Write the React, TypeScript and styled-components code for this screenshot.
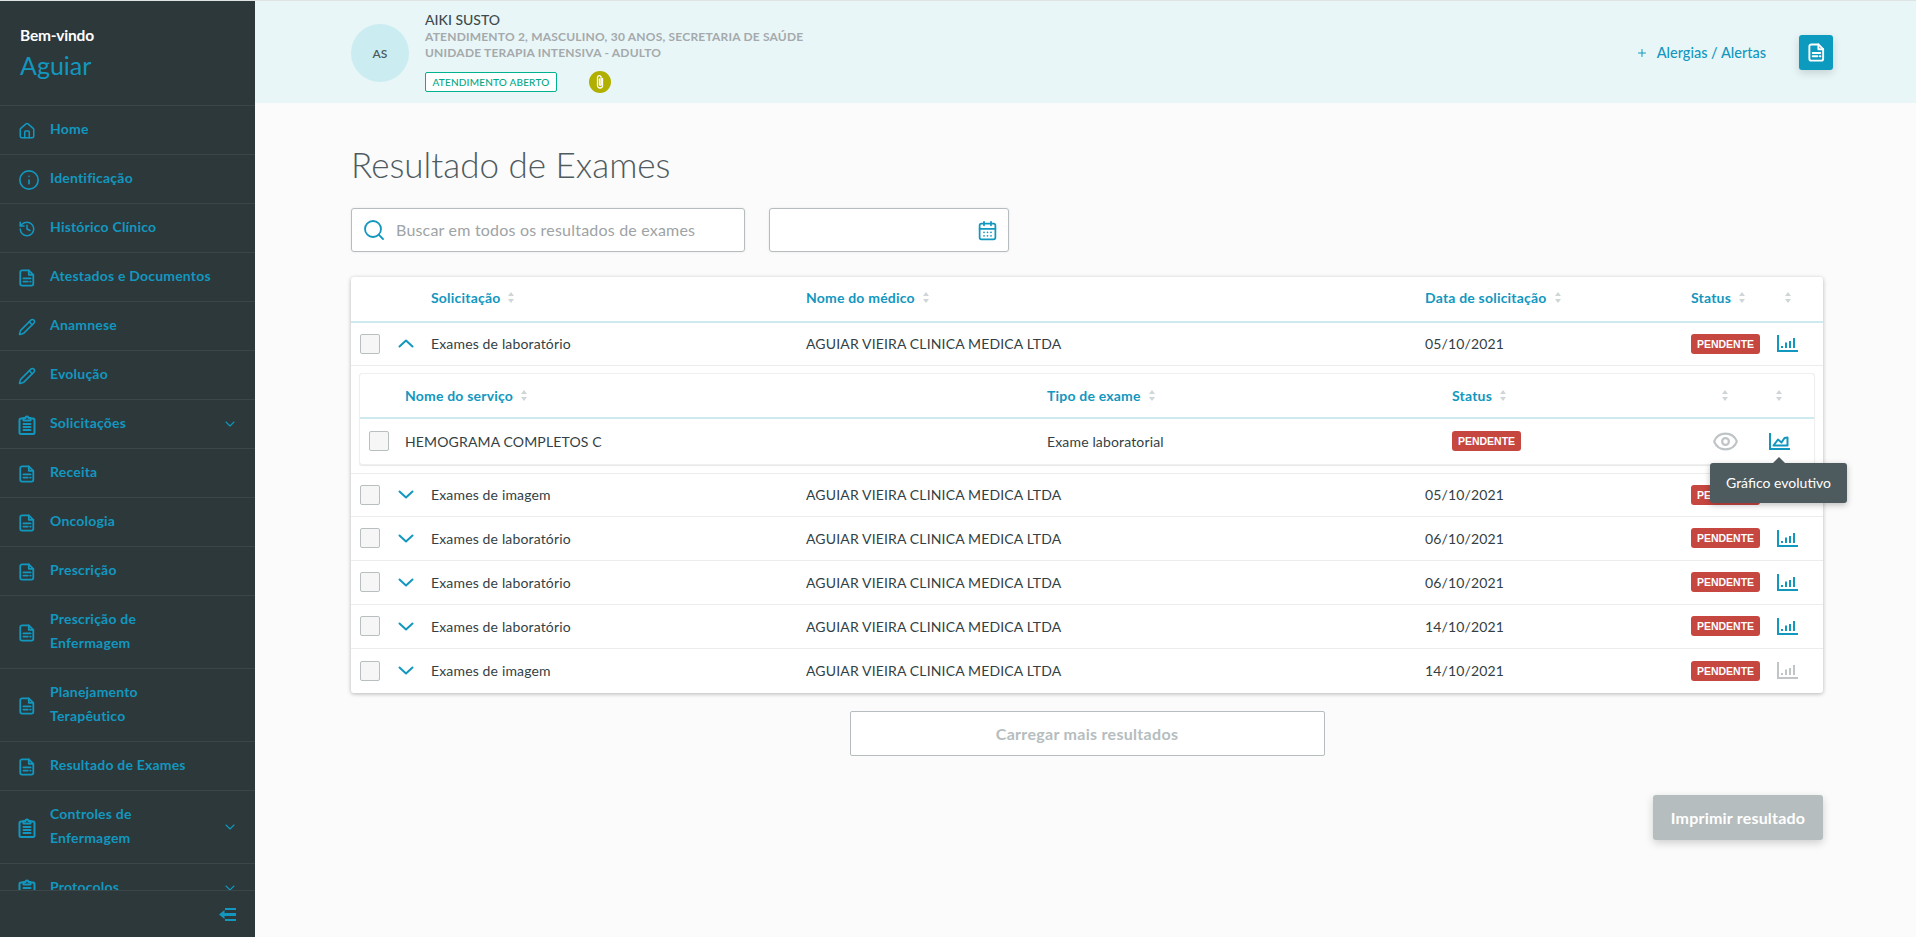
import React from "react";
import styled, { createGlobalStyle } from "styled-components";
import { Home, Info, History, Pencil, ChevronDown, Search, CalendarDays, Plus, Eye } from "lucide-react";

const FONT = `Lato, "Noto Sans", "Liberation Sans", sans-serif`;
const BLUE = "#1297bf";

const Global = createGlobalStyle`
  html, body { margin: 0; padding: 0; height: 100%; }
  body { font-family: ${FONT}; background: #fbfbfb; color: #2d383b; overflow: hidden; }
  * { box-sizing: border-box; }
`;

const Page = styled.div`display: flex; height: 937px; width: 1916px; overflow: hidden;`;
const Side = styled.aside`width: 255px; flex: none; display: flex; flex-direction: column; background: #2d383b; border-top: 1px solid #dfe3e3;`;
const Welcome = styled.div`height: 105px; flex: none; padding: 22px 20px 0; border-bottom: 1px solid #3b4649;`;
const Hello = styled.div`color: #fff; font-size: 15.5px; line-height: 24px; font-weight: 700; letter-spacing: -.2px;`;
const UserName = styled.div`color: ${BLUE}; font-size: 25px; line-height: 32px; margin-top: 2px; font-weight: 400;`;
const NavList = styled.nav`flex: 1; min-height: 0; overflow: hidden;`;
const NavRow = styled.div<{ $tall?: boolean }>`
  height: ${p => (p.$tall ? 73 : 49)}px; display: flex; align-items: center; padding: 0 17px 0 18px;
  border-bottom: 1px solid #3b4649; color: ${BLUE}; font-size: 14px; font-weight: 700; line-height: 24px; letter-spacing: .2px;
`;
const NavIcon = styled.span`width: 32px; flex: none; display: flex; align-items: center; justify-content: flex-start; margin-top: 2px;`;
const NavLabel = styled.span`flex: 1; margin-top: -3px;`;
const SideFoot = styled.div`height: 47px; flex: none; border-top: 1px solid #3b4649; display: flex; align-items: center; justify-content: flex-end; padding: 0 19px 0 0;`;

const Main = styled.div`flex: 1; min-width: 0; display: flex; flex-direction: column;`;
const Banner = styled.header`height: 103px; flex: none; background: #e8f6f8; border-top: 1px solid #dfe3e3; display: flex; align-items: flex-start; padding: 0 83px 0 96px;`;
const Avatar = styled.div`width: 58px; height: 58px; border-radius: 50%; background: #cbecf1; margin-top: 23px; display: flex; align-items: center; justify-content: center; font-size: 12px; font-weight: 600; color: #4d5a5e; flex: none;`;
const Patient = styled.div`margin-left: 16px; padding-top: 10px;`;
const PName = styled.div`font-size: 14px; line-height: 18px; font-weight: 500; color: #3e4a4e;`;
const PMeta = styled.div`font-size: 12px; line-height: 16px; font-weight: 700; color: #a5a9ab; letter-spacing: .2px;`;
const Tags = styled.div`display: flex; align-items: center; margin-top: 10px;`;
const OpenTag = styled.span`width: 132px; height: 20px; border: 1px solid #00b28e; border-radius: 2px; background: #fff; color: #00a886; font-size: 10px; font-weight: 500; letter-spacing: .2px; display: flex; align-items: center; justify-content: center;`;
const ClipDot = styled.span`width: 22px; height: 22px; border-radius: 50%; background: #b1b000; margin-left: 32px; display: flex; align-items: center; justify-content: center;`;
const BannerRight = styled.div`margin-left: auto; display: flex; align-items: center; padding-top: 34px;`;
const AlertLink = styled.span`color: ${BLUE}; font-size: 14.5px; font-weight: 500; display: flex; align-items: center; gap: 9px;`;
const DocButton = styled.span`width: 34px; height: 35px; background: #0c9abe; border-radius: 3px; margin-left: 33px; display: flex; align-items: center; justify-content: center; box-shadow: 0 3px 8px rgba(0,0,0,.15);`;

const Content = styled.main`flex: 1; padding: 0 93px 0 96px; min-height: 0;`;
const Title = styled.h1`margin: 41px 0 0; font-size: 35px; line-height: 40px; font-weight: 300; color: #4f5b5f;`;
const Filters = styled.div`display: flex; gap: 24px; margin-top: 24px;`;
const Field = styled.div<{ $w: number }>`width: ${p => p.$w}px; height: 44px; background: #fff; border: 1px solid #b5bdbe; border-radius: 3px; display: flex; align-items: center; padding: 0 10px; color: #a5a9ab; font-size: 14px; box-shadow: 0 0 3px rgba(0,0,0,.08);`;
const FieldSpacer = styled.span`flex: 1;`;
const FieldText = styled.span`margin-left: 10px; padding-bottom: 1px; font-size: 16px; letter-spacing: .2px; color: #9ea3a5;`;

const Card = styled.section`margin-top: 25px; background: #fff; border-radius: 3px; box-shadow: 0 1px 4px rgba(0,0,0,.28);`;
const mainCols = "80px 375px 619px 266px 74px 45px";
const subCols = "45px 642px 405px 247px 52px 56px";
const Head = styled.div<{ $cols: string; $h: number; $lift?: number }>`display: grid; grid-template-columns: ${p => p.$cols}; height: ${p => p.$h}px; align-items: center; padding-bottom: ${p => p.$lift || 0}px; border-bottom: 2px solid #cfe9f0;`;
const Row = styled.div<{ $cols: string; $h: number; $last?: boolean; $first?: boolean }>`display: grid; grid-template-columns: ${p => p.$cols}; height: ${p => p.$h}px; align-items: center; padding-bottom: 1px; border-bottom: ${p => (p.$last ? "none" : "1px solid #ececec")}; ${p => p.$first && "border-top: 1px solid #ececec;"} font-size: 14px; letter-spacing: .15px; color: #333f44;`;
const HeadCell = styled.div<{ $center?: boolean }>`display: flex; align-items: center; gap: 8px; color: ${BLUE}; font-size: 14px; font-weight: 700; letter-spacing: .2px; ${p => p.$center && "justify-content: center;"}`;
const ControlCell = styled.div`display: flex; align-items: center; padding-left: 9px; gap: 18px;`;
const CenterCell = styled.div`display: flex; justify-content: center; align-items: center;`;
const Check = styled.span`width: 20px; height: 20px; flex: none; background: #f6f6f6; border: 1px solid #b8bfc1; border-radius: 2px; display: block;`;
const Badge = styled.span`display: flex; width: 69px; height: 20px; border-radius: 3px; background: #c64640; color: #fff; font-size: 10.5px; font-weight: 700; align-items: center; justify-content: center; font-family: "Liberation Sans", sans-serif; letter-spacing: 0;`;
const Nested = styled.div`margin: 8px 9px 9px; border-radius: 2px; box-shadow: 0 0 0 1px #efefef, 0 1px 1px 1px #e8e8e8; `;
const NestedCheck = styled.div`padding-left: 9px;`;
const TipAnchor = styled.div`position: relative; display: flex; justify-content: center;`;
const Tooltip = styled.div`
  position: absolute; top: 30px; left: 50%; margin-left: -69px; width: 137px; height: 40px; background: #4d5a5e; color: #fff; border-radius: 3px; font-size: 14px; letter-spacing: 0; display: flex; align-items: center; justify-content: center; z-index: 3; box-shadow: 0 2px 6px rgba(0,0,0,.25);
  &::before { content: ""; position: absolute; top: -6px; left: 50%; margin-left: -6px; border: 6px solid transparent; border-top: 0; border-bottom-color: #4d5a5e; }
`;
const MoreWrap = styled.div`display: flex; justify-content: center; margin-top: 18px;`;
const MoreButton = styled.div`width: 475px; height: 45px; border: 1px solid #b5bdbe; border-radius: 2px; background: #fff; color: #b5bdbe; font-size: 16px; font-weight: 700; letter-spacing: .3px; display: flex; align-items: center; justify-content: center;`;
const PrintWrap = styled.div`display: flex; justify-content: flex-end; margin-top: 39px;`;
const PrintButton = styled.div`width: 170px; height: 45px; border-radius: 3px; background: #b5bdbe; color: #fff; font-size: 16px; font-weight: 700; letter-spacing: .2px; display: flex; align-items: center; justify-content: center; box-shadow: 0 3px 8px rgba(0,0,0,.18);`;

const FileDoc = ({ color = BLUE, size = 18 }: { color?: string; size?: number }) => (
  <svg width={size} height={size} viewBox="0 0 18 20" fill="none" stroke={color} strokeWidth="2" strokeLinejoin="round" strokeLinecap="round">
    <path d="M3.500 1.500h7.500l5 5v10a2 2 0 0 1-2 2H3.500a2 2 0 0 1-2-2v-13a2 2 0 0 1 2-2z" />
    <path d="M11 1.500v5h5" />
    <path d="M5 10.500h8M5 14h5M12.500 14h.6" />
  </svg>
);
const Clipboard = () => (
  <svg width="18" height="20" viewBox="0 0 18 20" fill="none" stroke={BLUE} strokeWidth="2" strokeLinecap="round" strokeLinejoin="round">
    <path d="M5.500 3.500H3a1.500 1.500 0 0 0-1.500 1.500v12.500A1.500 1.500 0 0 0 3 19h12a1.500 1.500 0 0 0 1.500-1.500V5A1.500 1.500 0 0 0 15 3.500h-2.500" />
    <path d="M5.500 5.500v-2.500h2a1.500 1.500 0 0 1 3 0h2v2.500z" />
    <path d="M5.500 9h7M5.500 12h7M5.500 15h7" />
  </svg>
);
const Collapse = () => (
  <svg width="17" height="13" viewBox="0 0 17 13" fill={BLUE}>
    <path d="M0 6.500l5.500-4.500v3h11.500v3H5.500v3z" />
    <rect x="6" y="0" width="11" height="2" />
    <rect x="6" y="11" width="11" height="2" />
  </svg>
);
const Sort = () => (
  <svg width="6" height="11" viewBox="0 0 6 11" fill="#d0d6d8">
    <path d="M3 0l3 4H0zM0 7h6l-3 4z" />
  </svg>
);
const Chevron = ({ up }: { up?: boolean }) => (
  <svg width="16" height="9" viewBox="0 0 16 9" fill="none" stroke={BLUE} strokeWidth="2" strokeLinecap="round" strokeLinejoin="round">
    <path d={up ? "M1.500 7.500L8 1.500l6.500 6" : "M1.500 1.500L8 7.500l6.500-6"} />
  </svg>
);
const Clip = () => (
  <svg width="10" height="16" viewBox="0 0 10 16" fill="none" stroke="#fff" strokeWidth="1.300" strokeLinecap="round">
    <path d="M7.500 4.500v7a2.500 2.500 0 0 1-5 0V3.500a1.800 1.800 0 0 1 3.600 0v7a.8.8 0 0 1-1.600 0V5" />
  </svg>
);
const Bars = ({ color = BLUE }: { color?: string }) => (
  <svg width="21" height="17" viewBox="0 0 21 17" fill="none" stroke={color}>
    <path d="M1 0v16h20" strokeWidth="2" />
    <path d="M5 13v-2M9 13V7.500M13 13V6M17 13V3" strokeWidth="2" />
  </svg>
);
const AreaLine = () => (
  <svg width="21" height="17" viewBox="0 0 21 17" fill="none" stroke={BLUE} strokeWidth="2">
    <path d="M1 0v16h20" />
    <path d="M4.500 12.500l4.500-6 3.500 3 3-4.500 3-.5v8z" strokeLinejoin="round" />
  </svg>
);

type Item = { label: React.ReactNode; icon: React.ReactNode; tall?: boolean; more?: boolean };
const ic = { size: 18, color: BLUE, strokeWidth: 2 };
const nav: Item[] = [
  { label: "Home", icon: <Home {...ic} /> },
  { label: "Identificação", icon: <Info {...ic} size={22} strokeWidth={1.8} /> },
  { label: "Histórico Clínico", icon: <History {...ic} /> },
  { label: "Atestados e Documentos", icon: <FileDoc /> },
  { label: "Anamnese", icon: <Pencil {...ic} /> },
  { label: "Evolução", icon: <Pencil {...ic} /> },
  { label: "Solicitações", icon: <Clipboard />, more: true },
  { label: "Receita", icon: <FileDoc /> },
  { label: "Oncologia", icon: <FileDoc /> },
  { label: "Prescrição", icon: <FileDoc /> },
  { label: <>Prescrição de<br />Enfermagem</>, icon: <FileDoc />, tall: true },
  { label: <>Planejamento<br />Terapêutico</>, icon: <FileDoc />, tall: true },
  { label: "Resultado de Exames", icon: <FileDoc /> },
  { label: <>Controles de<br />Enfermagem</>, icon: <Clipboard />, tall: true, more: true },
  { label: "Protocolos", icon: <Clipboard />, more: true },
];

const rows = [
  ["Exames de imagem", "05/10/2021", true],
  ["Exames de laboratório", "06/10/2021", false],
  ["Exames de laboratório", "06/10/2021", false],
  ["Exames de laboratório", "14/10/2021", false],
  ["Exames de imagem", "14/10/2021", true],
] as const;

const DOCTOR = "AGUIAR VIEIRA CLINICA MEDICA LTDA";

export default function App() {
  return (
    <Page>
      <Global />
      <Side>
        <Welcome>
          <Hello>Bem-vindo</Hello>
          <UserName>Aguiar</UserName>
        </Welcome>
        <NavList>
          {nav.map((n, i) => (
            <NavRow key={i} $tall={n.tall}>
              <NavIcon>{n.icon}</NavIcon>
              <NavLabel>{n.label}</NavLabel>
              {n.more && <ChevronDown size={16} color={BLUE} strokeWidth={1.6} />}
            </NavRow>
          ))}
        </NavList>
        <SideFoot><Collapse /></SideFoot>
      </Side>
      <Main>
        <Banner>
          <Avatar>AS</Avatar>
          <Patient>
            <PName>AIKI SUSTO</PName>
            <PMeta>ATENDIMENTO 2, MASCULINO, 30 ANOS, SECRETARIA DE SAÚDE</PMeta>
            <PMeta>UNIDADE TERAPIA INTENSIVA - ADULTO</PMeta>
            <Tags>
              <OpenTag>ATENDIMENTO ABERTO</OpenTag>
              <ClipDot><Clip /></ClipDot>
            </Tags>
          </Patient>
          <BannerRight>
            <AlertLink><Plus size={12} strokeWidth={2} />Alergias / Alertas</AlertLink>
            <DocButton><FileDoc color="#fff" size={19} /></DocButton>
          </BannerRight>
        </Banner>
        <Content>
          <Title>Resultado de Exames</Title>
          <Filters>
            <Field $w={394}>
              <Search size={24} color={BLUE} strokeWidth={1.8} />
              <FieldText>Buscar em todos os resultados de exames</FieldText>
            </Field>
            <Field $w={240}>
              <FieldSpacer />
              <CalendarDays size={21} color={BLUE} strokeWidth={2} />
            </Field>
          </Filters>
          <Card>
            <Head $cols={mainCols} $h={46} $lift={3}>
              <div />
              <HeadCell>Solicitação <Sort /></HeadCell>
              <HeadCell>Nome do médico <Sort /></HeadCell>
              <HeadCell>Data de solicitação <Sort /></HeadCell>
              <HeadCell>Status <Sort /></HeadCell>
              <HeadCell $center><Sort /></HeadCell>
            </Head>
            <Row $cols={mainCols} $h={43}>
              <ControlCell><Check /><Chevron up /></ControlCell>
              <div>Exames de laboratório</div>
              <div>{DOCTOR}</div>
              <div>05/10/2021</div>
              <Badge>PENDENTE</Badge>
              <CenterCell><Bars /></CenterCell>
            </Row>
            <Nested>
              <Head $cols={subCols} $h={45}>
                <div />
                <HeadCell>Nome do serviço <Sort /></HeadCell>
                <HeadCell>Tipo de exame <Sort /></HeadCell>
                <HeadCell>Status <Sort /></HeadCell>
                <HeadCell $center><Sort /></HeadCell>
                <HeadCell $center><Sort /></HeadCell>
              </Head>
              <Row $cols={subCols} $h={45} $last>
                <NestedCheck><Check /></NestedCheck>
                <div>HEMOGRAMA COMPLETOS C</div>
                <div>Exame laboratorial</div>
                <Badge>PENDENTE</Badge>
                <CenterCell><Eye size={27} color="#bfc5c7" strokeWidth={2} /></CenterCell>
                <TipAnchor>
                  <AreaLine />
                  <Tooltip>Gráfico evolutivo</Tooltip>
                </TipAnchor>
              </Row>
            </Nested>
            {rows.map((r, i) => (
              <Row key={i} $cols={mainCols} $h={44} $last={i === rows.length - 1} $first={i === 0}>
                <ControlCell><Check /><Chevron /></ControlCell>
                <div>{r[0]}</div>
                <div>{DOCTOR}</div>
                <div>{r[1]}</div>
                <Badge>PENDENTE</Badge>
                <CenterCell><Bars color={r[2] ? "#c0c6c8" : BLUE} /></CenterCell>
              </Row>
            ))}
          </Card>
          <MoreWrap><MoreButton>Carregar mais resultados</MoreButton></MoreWrap>
          <PrintWrap><PrintButton>Imprimir resultado</PrintButton></PrintWrap>
        </Content>
      </Main>
    </Page>
  );
}
